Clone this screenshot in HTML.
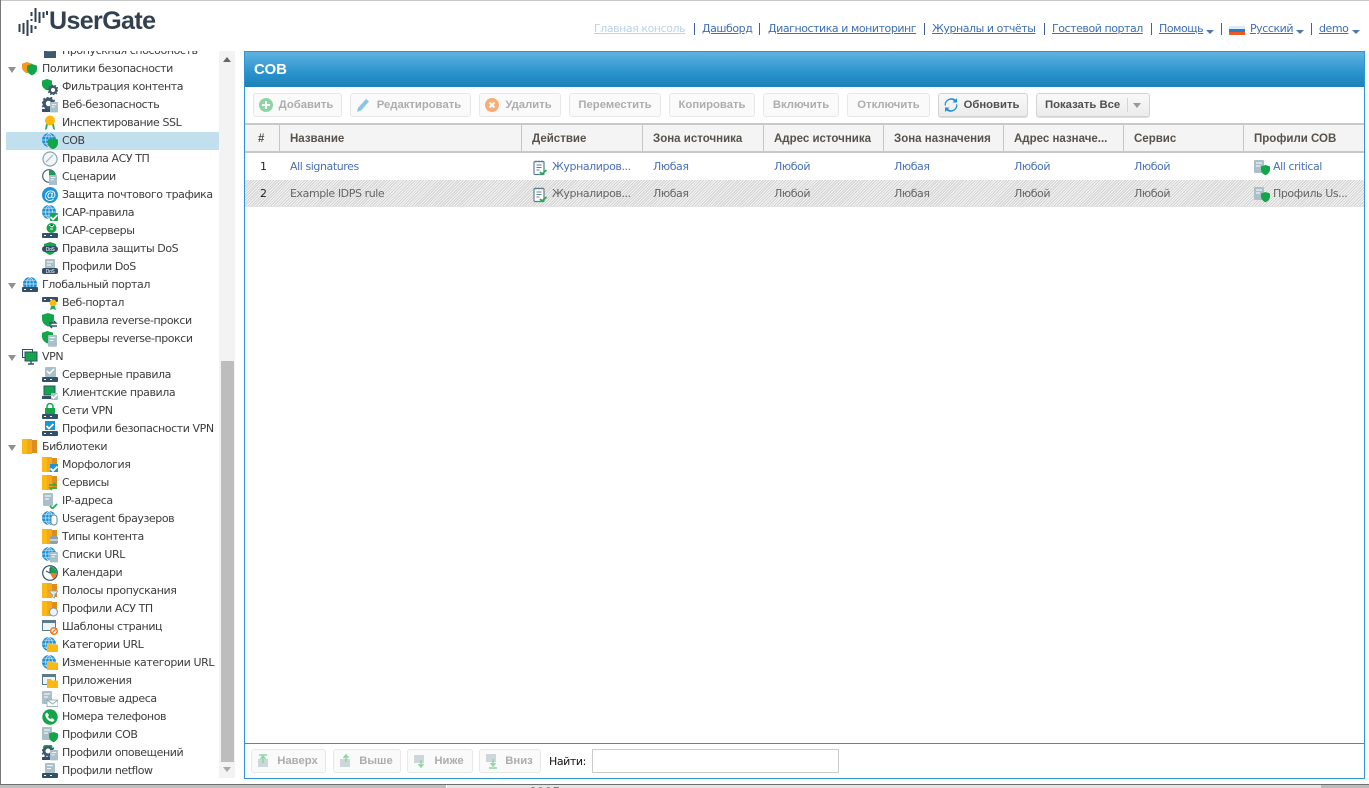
<!DOCTYPE html>
<html lang="ru"><head><meta charset="utf-8"><title>UserGate</title>
<style>
html,body{margin:0;padding:0;width:1369px;height:788px;overflow:hidden;background:#fff}
body{position:relative;font:11px "DejaVu Sans","Liberation Sans",sans-serif;color:#3c3c3c}
.a{position:absolute;white-space:nowrap}
#topl{left:0;top:0;width:1369px;height:1px;background:#c8c8c8}
#leftl{left:0;top:0;width:1px;height:784px;background:#777}
#logo{left:49px;top:4px;font:600 25px/34px "Liberation Sans",sans-serif;color:#33404f;letter-spacing:-.6px}
#nav a{position:absolute;top:22px;line-height:14px;color:#3e6fb3;text-decoration:underline;white-space:nowrap;font-size:11px;letter-spacing:-.45px}
#nav b{position:absolute;top:23px;width:1px;height:12px;background:#41619b}
#nav i{position:absolute;top:30px;width:0;height:0;border:4px solid transparent;border-top:4px solid #4b78b3;border-bottom:0}
#tree{left:1px;top:51px;width:219px;height:733px;overflow:hidden}
.r{position:absolute;height:18px;line-height:18px;white-space:nowrap;left:0;width:218px;letter-spacing:-.42px}
.r span{position:absolute;top:0}
.c span{left:61px}.p span{left:41px}
.r svg{position:absolute;top:1px;width:16px;height:16px}
.c svg{left:41px}.p svg{left:21px}
.p:before{content:"";position:absolute;left:7px;top:7px;border:4px solid transparent;border-top:6px solid #909090;border-bottom:0}
.s{background:#c2dfee;left:5px;width:213px}
.s span{left:56px}.s svg{left:36px}
#track{left:219px;top:51px;width:16px;height:727px;background:#f3f3f3}
#thumb{left:221px;top:361px;width:13px;height:401px;background:#bdbdbd}
.ua{left:223px;top:57px;border:4px solid transparent;border-bottom:5px solid #666;border-top:0}
.da{left:223px;top:767px;border:4px solid transparent;border-top:5px solid #a8a8a8;border-bottom:0}
#panel{left:244px;top:51px;width:1119px;height:726px;border:1px solid #2d96cf;background:#fff}
#hd{left:245px;top:52px;width:1119px;height:35px;background:linear-gradient(#60b3e1,#2a92cc 60%,#1c82b8);color:#fff;font:bold 15px/35px "Liberation Sans",sans-serif;text-indent:9px}
.b{position:absolute;box-sizing:border-box;height:24px;border:1px solid #e8e8e8;border-radius:3px;background:#fafafa;color:#adadad;font:bold 11.3px/23px "Liberation Sans",sans-serif;text-align:center;white-space:nowrap}
.b svg{position:absolute;left:4px;top:3px;width:16px;height:16px}
.on{border:1px solid #d3d3d3;background:linear-gradient(#f9f9f9,#ebebeb);color:#505050;box-shadow:0 1px 0 #ddd}
#th{left:245px;top:123px;width:1119px;background:#f4f4f4;border-top:2px solid #c8c8c8;border-bottom:2px solid #c8c8c8;box-sizing:content-box;height:26px}
.h{position:absolute;top:124px;height:30px;font:bold 11.5px/30px "Liberation Sans",sans-serif;color:#58524a;white-space:nowrap}
.sep{position:absolute;top:124px;height:28px;width:1px;background:#c6c6c6}
.t{position:absolute;line-height:14px;font-size:11px;color:#4a71b5;white-space:nowrap;letter-spacing:-.42px}
.g{color:#666}
#hatch{left:245px;top:180px;width:1119px;height:27px;background:repeating-linear-gradient(135deg,#d2d2d2 0,#d2d2d2 1px,#f4f4f4 1px,#f4f4f4 2px);border-bottom:1px solid #e2e2e2;box-sizing:border-box}
#fl{left:245px;top:743px;width:1119px;height:1px;background:#2d96cf}
#find{left:592px;top:749px;width:247px;height:24px;box-sizing:border-box;border:1px solid #ccc;background:#fff}
#bot1{left:0;top:784px;width:1369px;height:1px;background:#6f6f6f}
#bot2{left:0;top:785px;width:446px;height:3px;background:#c0c0c0}
#bot3{left:447px;top:785px;width:874px;height:3px;background:#e4e4e4;overflow:hidden}
#bot4{left:1321px;top:785px;width:48px;height:3px;background:#bcbcbc}
#bot3 span{position:absolute;left:82px;top:-1px;font:14px/16px "Liberation Sans",sans-serif;color:#222}
</style></head><body>
<svg width="0" height="0" style="position:absolute"><defs>
<g id="globe"><circle cx="7" cy="7" r="7" fill="#1c8fd6"/><path d="M0 7h14M7 0v14M1.500 3.200h11M1.500 10.800h11M7 0c-4.500 3-4.500 11 0 14M7 0c4.500 3 4.500 11 0 14" stroke="#d8eefb" stroke-width=".7" fill="none"/></g>
<path id="sh" d="M5 0l5 1.600V5c0 3-2 5-5 6.400C2 10 0 8 0 5V1.600z"/>
<g id="doc"><rect width="10" height="13" rx="1" fill="#a9c0c9"/><path d="M2 3h6M2 6h4" stroke="#fff"/></g>
<g id="srv"><rect width="16" height="5" rx="1" fill="#33506b"/><rect x="2" y="2" width="2" height="1" fill="#fff"/><rect x="8" y="2" width="2" height="1" fill="#fff"/></g>
<g id="bk"><rect width="5" height="15" fill="#fdb913"/><rect x="5" width="5" height="15" fill="#f6a81c"/><rect x="10" y="1" width="5" height="13" fill="#d98e1f"/></g>
<path id="fo" d="M0 1h4l1 1.500h6V10H0z" fill="#fdb913"/>
<g id="ge"><circle cx="5" cy="5" r="3.300" fill="none" stroke="#3d5a70" stroke-width="2.400"/><circle cx="5" cy="5" r="4.800" fill="none" stroke="#3d5a70" stroke-width="1.400" stroke-dasharray="1.500 1.500"/></g>
<path id="ck" d="M0 3l2.500 2.500L7 1" fill="none" stroke-width="1.800"/>
<g id="wnd"><rect x=".5" y="1.500" width="13" height="10" fill="#eef3f6" stroke="#5b7a8c"/><rect x="1" y="2" width="12" height="2" fill="#5b7a8c"/></g>
<g id="jr"><rect x="2" y="1.500" width="10" height="13" rx="1" fill="#fff" stroke="#5d7f92" stroke-width="1.200"/><path d="M4.500 5h5M4.500 7.500h5M4.500 10h3M4 .5v2M7 .5v2M10 .5v2" stroke="#5d7f92"/><path d="M8 12l2 2 4.500-4" fill="none" stroke="#22b14c" stroke-width="1.800"/></g>
</defs></svg>

<div class="a" id="topl"></div><div class="a" id="leftl"></div>
<svg class="a" style="left:18px;top:6px" width="30" height="30" viewBox="0 0 30 30"><path d="M1.500 18v8M5.500 17v11M9.500 14v16M13.500 6v4M13.500 13v2M13.500 19v8M17.500 2v14M17.500 20v3M21.500 6v11M25.500 6v6M29 5v4" stroke="#33404f" stroke-width="2"/></svg>
<div class="a" id="logo">UserGate</div>

<div id="nav">
<a style="left:594px;color:#bcd3ea">Главная консоль</a><b style="left:694px"></b>
<a style="left:702px">Дашборд</a><b style="left:759px"></b>
<a style="left:768px">Диагностика и мониторинг</a><b style="left:924px"></b>
<a style="left:932px">Журналы и отчёты</a><b style="left:1044px"></b>
<a style="left:1052px">Гостевой портал</a><b style="left:1151px"></b>
<a style="left:1159px">Помощь</a><i style="left:1206px"></i><b style="left:1221px"></b>
<svg class="a" style="left:1229px;top:26px" width="16" height="9"><rect width="16" height="3" fill="#dfe9f2"/><rect y="3" width="16" height="3" fill="#1f7fd0"/><rect y="6" width="16" height="3" fill="#ee5a1f"/></svg>
<a style="left:1250px">Русский</a><i style="left:1296px"></i><b style="left:1311px"></b>
<a style="left:1319px">demo</a><i style="left:1352px"></i>
</div>

<div class="a" id="tree">
<div class="r c" style="top:-9px"><svg viewBox="0 0 16 16"><rect x="2" y="6" width="12" height="9" fill="#3d5a70"/><rect x="5" y="3" width="6" height="6" fill="#22a04a"/></svg><span>Пропускная способность</span></div>
<div class="r p" style="top:9px"><svg viewBox="0 0 16 16"><use href="#sh" fill="#f39a1f" transform="translate(0 1)"/><use href="#sh" fill="#12a54a" transform="translate(5 3)"/></svg><span>Политики безопасности</span></div>
<div class="r c" style="top:27px"><svg viewBox="0 0 16 16"><use href="#sh" fill="#12a54a"/><use href="#ge" transform="translate(6 6)"/></svg><span>Фильтрация контента</span></div>
<div class="r c" style="top:45px"><svg viewBox="0 0 16 16"><use href="#ge" transform="scale(1.300)"/><rect y="12" width="10" height="3" fill="#33506b"/><use href="#doc" transform="translate(8 5) scale(.8)"/></svg><span>Веб-безопасность</span></div>
<div class="r c" style="top:63px"><svg viewBox="0 0 16 16"><path d="M4 9l-1 6 2-1 1-5zM12 9l1 6-2-1-1-5z" fill="#2fa866"/><circle cx="8" cy="5.500" r="5" fill="#fdb913"/></svg><span>Инспектирование SSL</span></div>
<div class="r c s" style="top:81px"><svg viewBox="0 0 16 16"><use href="#globe"/><use href="#sh" fill="#12a54a" transform="translate(6 5)"/></svg><span>СОВ</span></div>
<div class="r c" style="top:99px"><svg viewBox="0 0 16 16"><circle cx="8" cy="8" r="7" fill="#f2f6f8" stroke="#8ea5b3" stroke-width="1.200"/><path d="M4 11l7-7" stroke="#9fb4c0" stroke-width="1.200"/></svg><span>Правила АСУ ТП</span></div>
<div class="r c" style="top:117px"><svg viewBox="0 0 16 16"><circle cx="7" cy="7" r="6.300" fill="#fff" stroke="#44647c" stroke-width="1.200"/><path d="M7 7V1a6 6 0 0 1 6 6z" fill="#12a54a"/><use href="#doc" transform="translate(7 6) scale(.8)"/></svg><span>Сценарии</span></div>
<div class="r c" style="top:135px"><svg viewBox="0 0 16 16"><circle cx="8" cy="8" r="8" fill="#1e93d8"/><text x="8" y="12" font-size="12" font-weight="bold" fill="#fff" text-anchor="middle" font-family="Liberation Sans">@</text></svg><span>Защита почтового трафика</span></div>
<div class="r c" style="top:153px"><svg viewBox="0 0 16 16"><use href="#globe"/><rect x="8" y="8" width="8" height="8" rx="1" fill="#12a54a"/><use href="#ck" stroke="#fff" transform="translate(8.500 9)"/></svg><span>ICAP-правила</span></div>
<div class="r c" style="top:171px"><svg viewBox="0 0 16 16"><circle cx="9.500" cy="5" r="5" fill="#16a24c"/><path d="M7 2l3 2 2-2M8 6h3" stroke="#fff"/><use href="#srv" transform="translate(0 10)"/></svg><span>ICAP-серверы</span></div>
<div class="r c" style="top:189px"><svg viewBox="0 0 16 16"><path d="M8 1l6 2v5c0 3-3 5-6 6-3-1-6-3-6-6V3z" fill="#12a54a"/><rect y="5" width="16" height="6" rx="3" fill="#33506b"/><text x="8" y="10" font-size="5" fill="#fff" text-anchor="middle" font-family="Liberation Sans">DoS</text></svg><span>Правила защиты DoS</span></div>
<div class="r c" style="top:207px"><svg viewBox="0 0 16 16"><use href="#doc" transform="translate(3 0)"/><rect y="9" width="16" height="6" rx="2" fill="#33506b"/><text x="8" y="14" font-size="5" fill="#fff" text-anchor="middle" font-family="Liberation Sans">DoS</text></svg><span>Профили DoS</span></div>
<div class="r p" style="top:225px"><svg viewBox="0 0 16 16"><g transform="translate(1 0)"><use href="#globe"/></g><use href="#srv" transform="translate(0 10)"/></svg><span>Глобальный портал</span></div>
<div class="r c" style="top:243px"><svg viewBox="0 0 16 16"><use href="#srv" transform="translate(0 2)"/><circle cx="11" cy="8" r="3.500" fill="#fdb913"/><path d="M9 11l-1 4 3-1 3 1-1-4" fill="#2fa866"/></svg><span>Веб-портал</span></div>
<div class="r c" style="top:261px"><svg viewBox="0 0 16 16"><use href="#sh" fill="#12a54a" transform="scale(1.200)"/><path d="M7 10h7l-2-2M15 13H8l2 2" fill="none" stroke="#33506b" stroke-width="1.400"/></svg><span>Правила reverse-прокси</span></div>
<div class="r c" style="top:279px"><svg viewBox="0 0 16 16"><use href="#sh" fill="#12a54a" transform="scale(1.100)"/><use href="#doc" transform="translate(6 4) scale(.9)"/></svg><span>Серверы reverse-прокси</span></div>
<div class="r p" style="top:297px"><svg viewBox="0 0 16 16"><rect x=".5" y=".5" width="10" height="8" fill="#fff" stroke="#33506b"/><rect x="3" y="3" width="12" height="9" fill="#12a54a" stroke="#33506b"/><path d="M6 15h6M9 12v3" stroke="#33506b" stroke-width="1.400"/></svg><span>VPN</span></div>
<div class="r c" style="top:315px"><svg viewBox="0 0 16 16"><rect x="3" y="0" width="11" height="10" rx="1" fill="#a9c0c9"/><path d="M5 4l2.500 2.500L12 2" fill="none" stroke="#fff" stroke-width="1.500"/><use href="#srv" transform="translate(0 10)"/></svg><span>Серверные правила</span></div>
<div class="r c" style="top:333px"><svg viewBox="0 0 16 16"><rect x="2" y="1" width="11" height="9" fill="#12a54a" stroke="#33506b"/><rect y="11" width="14" height="3" fill="#33506b"/><rect x="9" y="8" width="7" height="7" rx="1" fill="#a9c0c9"/><use href="#ck" stroke="#fff" transform="translate(9.500 8.500) scale(.85)"/></svg><span>Клиентские правила</span></div>
<div class="r c" style="top:351px"><svg viewBox="0 0 16 16"><path d="M5 5V3.500a3 3 0 0 1 6 0V5" fill="none" stroke="#12a54a" stroke-width="1.500"/><rect x="3" y="5" width="10" height="6" fill="#12a54a"/><use href="#srv" transform="translate(0 11)"/></svg><span>Сети VPN</span></div>
<div class="r c" style="top:369px"><svg viewBox="0 0 16 16"><rect x="3" y="0" width="10" height="9" fill="#1e93d8"/><use href="#ck" stroke="#fff" transform="translate(4.500 2)"/><use href="#srv" transform="translate(0 10)"/></svg><span>Профили безопасности VPN</span></div>
<div class="r p" style="top:387px"><svg viewBox="0 0 16 16"><use href="#bk"/></svg><span>Библиотеки</span></div>
<div class="r c" style="top:405px"><svg viewBox="0 0 16 16"><use href="#bk"/><rect x="8" y="7" width="8" height="8" fill="#1e93d8"/><use href="#ck" stroke="#fff" transform="translate(8.500 8.500)"/></svg><span>Морфология</span></div>
<div class="r c" style="top:423px"><svg viewBox="0 0 16 16"><use href="#bk"/><path d="M7 10h7l-2-2M15 13H8l2 2" fill="none" stroke="#22b14c" stroke-width="1.400"/></svg><span>Сервисы</span></div>
<div class="r c" style="top:441px"><svg viewBox="0 0 16 16"><use href="#doc" transform="translate(1 0)"/><use href="#ck" stroke="#22b14c" transform="translate(8 10)"/></svg><span>IP-адреса</span></div>
<div class="r c" style="top:459px"><svg viewBox="0 0 16 16"><use href="#globe"/><rect x="9" y="4" width="6" height="10" rx="3" fill="#fff" stroke="#6a8a9c"/></svg><span>Useragent браузеров</span></div>
<div class="r c" style="top:477px"><svg viewBox="0 0 16 16"><use href="#bk"/><rect x="8" y="7" width="8" height="8" rx="2" fill="#8ba2ae"/><path d="M8 11h8" stroke="#fff"/></svg><span>Типы контента</span></div>
<div class="r c" style="top:495px"><svg viewBox="0 0 16 16"><use href="#globe"/><use href="#doc" transform="translate(8 5) scale(.8)"/></svg><span>Списки URL</span></div>
<div class="r c" style="top:513px"><svg viewBox="0 0 16 16"><circle cx="8" cy="8" r="7.300" fill="#fff" stroke="#33506b" stroke-width="1.200"/><path d="M8 8l6.500 0A6.500 6.500 0 0 1 11 13.700z" fill="#f47a20"/><path d="M8 8V1.500A6.500 6.500 0 0 1 14.500 8z" fill="#12a54a"/><path d="M8 3v5l-4-2" fill="none" stroke="#33506b"/></svg><span>Календари</span></div>
<div class="r c" style="top:531px"><svg viewBox="0 0 16 16"><use href="#bk"/><path d="M7 8h9l-3.500 4v3l-2-1v-2z" fill="#dfe7eb" stroke="#8ba2ae" stroke-width=".7"/></svg><span>Полосы пропускания</span></div>
<div class="r c" style="top:549px"><svg viewBox="0 0 16 16"><use href="#bk"/><circle cx="11.500" cy="11" r="4" fill="#eef3f6" stroke="#7f98a8"/></svg><span>Профили АСУ ТП</span></div>
<div class="r c" style="top:567px"><svg viewBox="0 0 16 16"><use href="#wnd"/><circle cx="12" cy="12" r="3.300" fill="#fff" stroke="#f47a20" stroke-width="1.500"/><path d="M10 14l4-4" stroke="#f47a20" stroke-width="1.300"/></svg><span>Шаблоны страниц</span></div>
<div class="r c" style="top:585px"><svg viewBox="0 0 16 16"><use href="#globe"/><use href="#fo" transform="translate(5 5)"/></svg><span>Категории URL</span></div>
<div class="r c" style="top:603px"><svg viewBox="0 0 16 16"><use href="#globe"/><use href="#fo" transform="translate(5 5)"/></svg><span>Измененные категории URL</span></div>
<div class="r c" style="top:621px"><svg viewBox="0 0 16 16"><use href="#wnd"/><use href="#fo" transform="translate(5 5)"/></svg><span>Приложения</span></div>
<div class="r c" style="top:639px"><svg viewBox="0 0 16 16"><use href="#doc"/><rect x="5" y="9" width="11" height="6.500" fill="#fff" stroke="#8ba2ae" stroke-width=".8"/><path d="M5 9l5.500 4L16 9" fill="none" stroke="#8ba2ae" stroke-width=".8"/></svg><span>Почтовые адреса</span></div>
<div class="r c" style="top:657px"><svg viewBox="0 0 16 16"><circle cx="8" cy="8" r="7.700" fill="#12a54a"/><path d="M5 3.500l2 2.500-1 1.500c.5 1.200 1.300 2 2.500 2.500l1.500-1 2.500 2c-.7 1.500-2 2-3.500 1.500C6 11.500 4.500 10 3.500 7 3 5.500 3.500 4.200 5 3.500z" fill="#fff"/></svg><span>Номера телефонов</span></div>
<div class="r c" style="top:675px"><svg viewBox="0 0 16 16"><use href="#doc"/><use href="#sh" fill="#12a54a" transform="translate(7 5) scale(.9)"/></svg><span>Профили СОВ</span></div>
<div class="r c" style="top:693px"><svg viewBox="0 0 16 16"><use href="#ge" transform="scale(1.200)"/><rect y="12" width="9" height="3" fill="#33506b"/><path d="M2 2a6 6 0 0 1 6-2l2 2" fill="none" stroke="#12a54a" stroke-width="2"/><use href="#doc" transform="translate(8 5) scale(.8)"/></svg><span>Профили оповещений</span></div>
<div class="r c" style="top:711px"><svg viewBox="0 0 16 16"><use href="#doc" transform="translate(3 0) scale(1 .9)"/><use href="#srv" transform="translate(0 10)"/></svg><span>Профили netflow</span></div>
</div>
<div class="a" id="track"></div><div class="a" id="thumb"></div><div class="a ua"></div><div class="a da"></div>

<div class="a" id="panel"></div>
<div class="a" id="hd">СОВ</div>

<div class="b" style="left:253px;top:93px;width:89px;padding-left:17px"><svg viewBox="0 0 16 16" opacity=".5"><circle cx="8" cy="8" r="7" fill="#22b14c"/><path d="M8 4v8M4 8h8" stroke="#fff" stroke-width="2"/></svg>Добавить</div>
<div class="b" style="left:350px;top:93px;width:121px;padding-left:17px"><svg viewBox="0 0 16 16" opacity=".6"><path d="M2 15l1-4 8-9 3 2.500-8 9z" fill="#3aa3dd"/></svg>Редактировать</div>
<div class="b" style="left:479px;top:93px;width:82px;padding-left:17px"><svg viewBox="0 0 16 16" opacity=".6"><circle cx="8" cy="8" r="7" fill="#f47a20"/><path d="M5.500 5.500l5 5M10.500 5.500l-5 5" stroke="#fff" stroke-width="2"/></svg>Удалить</div>
<div class="b" style="left:569px;top:93px;width:92px">Переместить</div>
<div class="b" style="left:669px;top:93px;width:86px">Копировать</div>
<div class="b" style="left:763px;top:93px;width:76px">Включить</div>
<div class="b" style="left:847px;top:93px;width:83px">Отключить</div>
<div class="b on" style="left:938px;top:93px;width:90px;padding-left:17px"><svg viewBox="0 0 16 16"><path d="M3 9a5 5 0 0 1 8-5l-1.500 1.500H14V1l-1.500 1.500A7 7 0 0 0 1.500 8zM13 7a5 5 0 0 1-8 5l1.500-1.500H2V15l1.500-1.500A7 7 0 0 0 14.500 8z" fill="#1e93d8"/></svg>Обновить</div>
<div class="b on" style="left:1036px;top:93px;width:114px;text-align:left;padding-left:8px">Показать Все<span class="a" style="left:90px;top:4px;width:1px;height:14px;background:#d5d5d5"></span><span class="a" style="left:96px;top:9px;border:4px solid transparent;border-top:5px solid #999;border-bottom:0"></span></div>

<div class="a" id="th"></div>
<div class="sep" style="left:279px"></div><div class="sep" style="left:521px"></div><div class="sep" style="left:642px"></div><div class="sep" style="left:763px"></div><div class="sep" style="left:883px"></div><div class="sep" style="left:1003px"></div><div class="sep" style="left:1123px"></div><div class="sep" style="left:1243px"></div>
<div class="h" style="left:258px">#</div><div class="h" style="left:290px">Название</div><div class="h" style="left:532px">Действие</div><div class="h" style="left:653px">Зона источника</div><div class="h" style="left:774px">Адрес источника</div><div class="h" style="left:894px">Зона назначения</div><div class="h" style="left:1014px">Адрес назначе...</div><div class="h" style="left:1134px">Сервис</div><div class="h" style="left:1254px">Профили СОВ</div>

<div class="a" id="hatch"></div>
<div class="t" style="left:260px;top:160px;color:#222">1</div><div class="t" style="left:260px;top:187px;color:#222">2</div>
<div class="t" style="left:290px;top:160px">All signatures</div><div class="t g" style="left:290px;top:187px">Example IDPS rule</div>
<svg class="a" style="left:532px;top:160px" width="16" height="16" viewBox="0 0 16 16"><use href="#jr"/></svg>
<svg class="a" style="left:532px;top:187px" width="16" height="16" viewBox="0 0 16 16"><use href="#jr"/></svg>
<div class="t" style="left:552px;top:160px">Журналиров...</div><div class="t g" style="left:552px;top:187px">Журналиров...</div>
<div class="t" style="left:653px;top:160px">Любая</div><div class="t g" style="left:653px;top:187px">Любая</div>
<div class="t" style="left:774px;top:160px">Любой</div><div class="t g" style="left:774px;top:187px">Любой</div>
<div class="t" style="left:894px;top:160px">Любая</div><div class="t g" style="left:894px;top:187px">Любая</div>
<div class="t" style="left:1014px;top:160px">Любой</div><div class="t g" style="left:1014px;top:187px">Любой</div>
<div class="t" style="left:1134px;top:160px">Любой</div><div class="t g" style="left:1134px;top:187px">Любой</div>
<svg class="a" style="left:1254px;top:160px" width="16" height="16" viewBox="0 0 16 16"><use href="#doc"/><use href="#sh" fill="#12a54a" transform="translate(7 5) scale(.9)"/></svg>
<svg class="a" style="left:1254px;top:187px" width="16" height="16" viewBox="0 0 16 16"><use href="#doc"/><use href="#sh" fill="#12a54a" transform="translate(7 5) scale(.9)"/></svg>
<div class="t" style="left:1273px;top:160px">All critical</div><div class="t g" style="left:1273px;top:187px">Профиль Us...</div>

<div class="a" id="fl"></div>
<div class="b" style="left:251px;top:749px;width:75px;padding-left:18px"><svg viewBox="0 0 16 16" opacity=".5"><rect x="2" y="6" width="10" height="8" fill="#9fb4be"/><path d="M3 2h8M7 10V3M4.500 6L7 3l2.500 3" fill="none" stroke="#22b14c" stroke-width="1.500"/></svg>Наверх</div>
<div class="b" style="left:333px;top:749px;width:68px;padding-left:18px"><svg viewBox="0 0 16 16" opacity=".5"><rect x="2" y="6" width="10" height="8" fill="#9fb4be"/><path d="M8 9V2M5.500 5L8 2l2.500 3" fill="none" stroke="#22b14c" stroke-width="1.500"/></svg>Выше</div>
<div class="b" style="left:407px;top:749px;width:66px;padding-left:18px"><svg viewBox="0 0 16 16" opacity=".5"><rect x="2" y="2" width="10" height="8" fill="#9fb4be"/><path d="M9 7v7M6.500 11L9 14l2.500-3" fill="none" stroke="#22b14c" stroke-width="1.500"/></svg>Ниже</div>
<div class="b" style="left:479px;top:749px;width:62px;padding-left:18px"><svg viewBox="0 0 16 16" opacity=".5"><rect x="2" y="1" width="10" height="8" fill="#9fb4be"/><path d="M9 6v7M6.500 10L9 13l2.500-3M5 15h8" fill="none" stroke="#22b14c" stroke-width="1.500"/></svg>Вниз</div>
<div class="a" style="left:549px;top:755px;line-height:14px;font-size:11px;color:#111;letter-spacing:-.42px">Найти:</div>
<div class="a" id="find"></div>

<div class="a" id="bot1"></div><div class="a" id="bot2"></div>
<div class="a" id="bot3"><span>2005</span></div><div class="a" id="bot4"></div>
</body></html>
